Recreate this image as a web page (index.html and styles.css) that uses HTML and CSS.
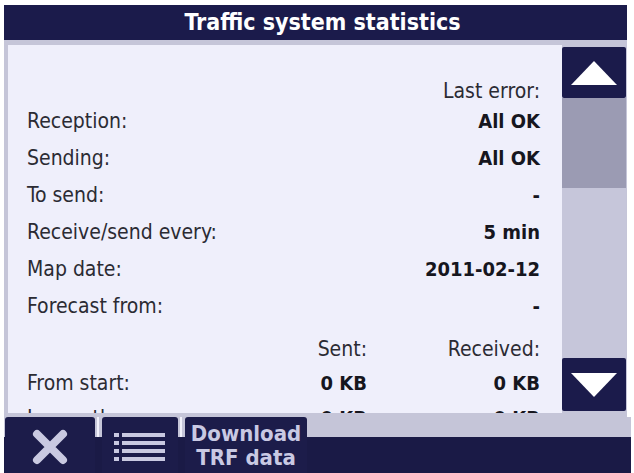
FILE: index.html
```html
<!DOCTYPE html>
<html>
<head>
<meta charset="utf-8">
<link rel="stylesheet" href="styles.css">
</head>
<body>
<div class="screen">
  <div class="title">Traffic system statistics</div>
  <div class="frame">
    <div class="panel">
      <div class="row first"><span class="lab"></span><span class="hdr">Last error:</span></div>
      <div class="row"><span class="lab">Reception:</span><span class="val">All OK</span></div>
      <div class="row"><span class="lab">Sending:</span><span class="val">All OK</span></div>
      <div class="row"><span class="lab">To send:</span><span class="val">-</span></div>
      <div class="row"><span class="lab">Receive/send every:</span><span class="val">5 min</span></div>
      <div class="row"><span class="lab">Map date:</span><span class="val">2011-02-12</span></div>
      <div class="row tall"><span class="lab">Forecast from:</span><span class="val">-</span></div>
      <div class="row sent"><span class="lab"></span><span class="c1">Sent:</span><span class="c2">Received:</span></div>
      <div class="row start"><span class="lab">From start:</span><span class="c1 b">0 KB</span><span class="c2 b">0 KB</span></div>
      <div class="row"><span class="lab">In month:</span><span class="c1 b">0 KB</span><span class="c2 b">0 KB</span></div>
    </div>
    <div class="scroll">
      <div class="sbtn">
        <svg width="46" height="24" viewBox="0 0 46 24"><polygon points="23,0 46,24 0,24" fill="#ffffff"/></svg>
      </div>
      <div class="thumb"></div>
      <div class="track"></div>
      <div class="sbtn down">
        <svg width="46" height="24" viewBox="0 0 46 24"><polygon points="0,0 46,0 23,24" fill="#ffffff"/></svg>
      </div>
    </div>
  </div>
  <div class="toolbar">
    <div class="tb close">
      <svg width="36" height="36" viewBox="0 0 36 36"><path d="M5 5 L31 31 M31 5 L5 31" stroke="#c9c9e1" stroke-width="8" stroke-linecap="round"/></svg>
    </div>
    <div class="sep"></div>
    <div class="tb list">
      <svg width="52" height="30" viewBox="0 0 52 30">
        <g fill="#c9c9e1">
          <rect x="0" y="1" width="5" height="4"/><rect x="8" y="1" width="43" height="4"/>
          <rect x="0" y="9" width="5" height="4"/><rect x="8" y="9" width="43" height="4"/>
          <rect x="0" y="17" width="5" height="4"/><rect x="8" y="17" width="43" height="4"/>
          <rect x="0" y="25" width="5" height="4"/><rect x="8" y="25" width="43" height="4"/>
        </g>
      </svg>
    </div>
    <div class="sep"></div>
    <div class="tb dl">Download<br>TRF data</div>
  </div>
</div>
</body>
</html>
```
FILE: styles.css
```css
html, body {
  margin: 0;
  padding: 0;
  background: #ffffff;
}
body {
  font-family: "DejaVu Sans Condensed", "DejaVu Sans", sans-serif;
  font-stretch: condensed;
}
.screen {
  margin-left: 4px;
  padding-top: 5px;
  width: 627px;
}
.title {
  width: 623px;
  height: 35px;
  box-sizing: border-box;
  padding-left: 14px;
  background: #1b1b4b;
  color: #ffffff;
  font-weight: bold;
  font-size: 23px;
  line-height: 35px;
  text-align: center;
}
.frame {
  width: 623px;
  height: 377px;
  box-sizing: border-box;
  padding: 5px 0 4px 4px;
  background: #c5c5d8;
  display: flex;
}
.panel {
  width: 554px;
  height: 368px;
  box-sizing: border-box;
  padding: 34px 22px 0 19px;
  background: #efeffb;
  overflow: hidden;
  color: #2b2b33;
}
.row {
  display: flex;
  height: 37px;
  font-size: 21px;
  line-height: 24px;
}
.row.first { height: 30px; }
.row.tall { height: 43px; }
.row.sent { height: 34px; }
.row.start { height: 35px; }
.lab {
  flex: 1;
  white-space: nowrap;
}
.hdr {
  text-align: right;
}
.val {
  font-weight: bold;
  font-size: 20px;
  color: #16161e;
  text-align: right;
}
.c1 {
  width: 120px;
  text-align: right;
}
.c2 {
  width: 173px;
  text-align: right;
}
.b {
  font-weight: bold;
  font-size: 20px;
  color: #16161e;
}
.scroll {
  width: 65px;
  margin: 2px 0;
  display: flex;
  flex-direction: column;
}
.sbtn {
  height: 51px;
  width: 64px;
  background: #1b1b4b;
  border-radius: 2px;
  display: flex;
  align-items: center;
  justify-content: center;
}
.sbtn.down {
  height: 53px;
}
.thumb {
  height: 90px;
  width: 64px;
  background: #9b9bb3;
}
.track {
  flex: 1;
  width: 64px;
  background: #c6c6da;
}
.toolbar {
  width: 627px;
  height: 56px;
  display: flex;
  background: linear-gradient(#c5c5d8 0, #c5c5d8 20px, #1a1a46 20px, #1a1a46 100%);
}
.tb {
  background: #1c1c4a;
  border-radius: 3px 3px 0 0;
  display: flex;
  align-items: center;
  justify-content: center;
}
.close {
  margin-left: 1px;
  width: 90px;
  padding-top: 3px;
  box-sizing: border-box;
}
.list {
  width: 76px;
  padding-top: 4px;
  box-sizing: border-box;
}
.sep {
  width: 7px;
  background: linear-gradient(to right, transparent 2px, #f2f2fb 2px, #f2f2fb 4px, transparent 4px) no-repeat;
  background-size: 100% 20px;
}
.dl {
  width: 122px;
  display: block;
  text-align: center;
  color: #c9c9e3;
  font-weight: bold;
  font-size: 22px;
  line-height: 24px;
  padding-top: 5px;
  box-sizing: border-box;
  white-space: nowrap;
}
```
